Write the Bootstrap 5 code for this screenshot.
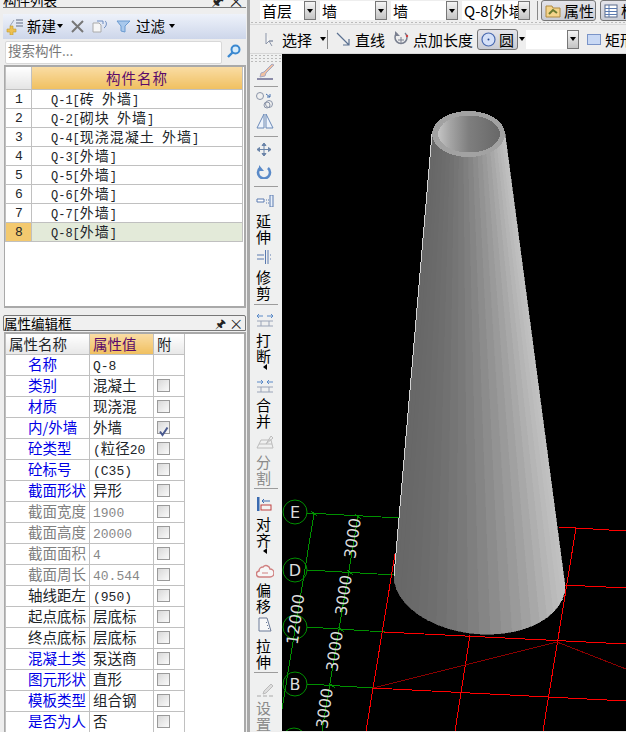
<!DOCTYPE html>
<html lang="zh">
<head>
<meta charset="utf-8">
<title>构件列表</title>
<link href="https://cdn.jsdelivr.net/npm/bootstrap@5.3.0/dist/css/bootstrap.min.css" rel="stylesheet">
<style>
html,body{margin:0;height:100%;overflow:hidden;background:#f0f0f0}
body{font-family:"Noto Sans CJK SC","Liberation Sans",sans-serif;font-size:14px;color:#000;line-height:1}
.app{width:626px;height:732px;overflow:hidden}
.leftcol{width:250px;height:732px;flex:none;background:#eeeeee;border-right:3px solid #a8a8a8;padding-right:1px}
.ptitle-top{height:8px;overflow:hidden;margin-left:3px;border-bottom:1px solid #777;display:flex;align-items:flex-end;justify-content:space-between;padding-right:4px}
.ptitle-top span{font-size:13.5px;line-height:14px;white-space:nowrap}
.pin{font-size:12px;line-height:14px;color:#222}
.tb1{height:25px;margin:6px 0 0 3px;background:linear-gradient(#eef2fa,#cdd6ea);gap:0;padding-left:3px;font-size:14.5px;white-space:nowrap}
.caret-d{display:inline-block;flex:none;width:0;height:0;border:3px solid transparent;border-top:4px solid #000;border-bottom:0}
.gp1{margin-left:1px}.gp2{margin-left:4px}.gp3{margin-left:5px}.gp4{margin-left:8px}
.searchrow{height:26px;padding:2px 0 0 5px}
.searchbox{width:217px;height:23px;background:#fff;border:1px solid #d8d8d8;border-radius:2px;color:#777;font-size:13.5px;padding:2px 0 0 2px}
.listbox{height:244px;margin-left:4px;margin-top:0;background:#fff;border:2px solid #a9a9a9;border-left-width:1px}
.gtab{table-layout:fixed;width:auto;margin:0;border-collapse:collapse;--bs-table-bg:transparent}
.gtab td,.gtab th{border:1px solid #c0c0c0;padding:0;font-weight:400;vertical-align:middle;white-space:nowrap;overflow:hidden;box-shadow:none}
.ltab{width:238px}
.ltab tr{height:19px}
.ltab tr.hd{height:23px}
.ltab th{border-top:0;background:linear-gradient(#f9dca4,#f0c060);color:#5a0a6a;text-align:center;font-size:14.5px;letter-spacing:1px}
.ltab th.ix{background:linear-gradient(#ffffff,#e4e4e4)}
.ltab td.ix{font-size:13px;padding-left:9px;font-family:"Liberation Mono",monospace}
.ltab td.nm{font-size:14px;padding-left:19px;letter-spacing:1px}
.mono{font-family:"Liberation Mono",monospace;font-size:12px;letter-spacing:0}
.ltab tr.sel td{background:#e3ead9}
.ltab tr.sel td.ix{background:#f3c96f}
.ptitle{height:16px;margin:7px 0 0 3px;border:1px solid #777;border-radius:2px 2px 0 0;background:#f0f0f0;font-size:13.5px;line-height:14px;padding-right:4px}
.propbox{height:401px;margin:1px 0 0 4px;border:2px solid #a9a9a9;border-left-width:1px;border-bottom:0;background:#fff;overflow:hidden}
.ptab{width:179px}
.ptab tr{height:21px}
.ptab tr.hd{height:20px}
.ptab th{border-top:0;font-size:14.5px;background:linear-gradient(#ffffff,#e8e8e8);padding-left:3px}
.ptab th.v{background:linear-gradient(#f9dca4,#f0c060);color:#5a0a6a;padding-left:3px}
.ptab td{font-size:14.5px}
.ptab td.n{padding-left:22px}
.ptab td.v{padding-left:3px}
.ptab td.c{padding-left:3px}
.blu{color:#0000e6}
.gry{color:#808080}
.ptab .mono{font-size:13px}
.gval .mono{color:#888}
.hi{background:#e3ead9}
.ckb{display:block;width:13px;height:13px;border:1px solid #9a9a9a;background:linear-gradient(135deg,#d8d8d8,#fafafa)}
.rightcol{flex:1;min-width:0;height:732px;background:#eeeeee}
.tr1{height:21px;padding-left:10px;font-size:15px;white-space:nowrap;overflow:hidden}
.cbox{background:#fff;height:19px;display:flex;align-items:center;padding-left:2px;overflow:hidden;flex:none}
.w44{width:44px}.w55{width:55px}.w56{width:56px}.w41{width:41px}
.cbtn{width:12px;height:19px;background:linear-gradient(#f4f4f4,#c4c4c4);border:1px solid #777;display:flex;align-items:center;justify-content:center;margin-right:4px;flex:none}
.selbtn{border:1px solid #777;border-radius:3px;background:linear-gradient(#e4e4ea,#c9ccd4);height:21px;display:flex;align-items:center;gap:3px;padding:0 3px;flex:none}
.sb-w{width:55px}
.vsepline{width:1px;height:19px;background:#888;margin:0 3px;flex:none}
.tr2 .vsepline{margin:0 0 0 1px}
.ml1{margin-left:1px}
.dots{height:3px;background-image:radial-gradient(#bbb 1px,transparent 1px);background-size:4px 3px}
.tr2{height:30px;padding-left:15px;font-size:15px;white-space:nowrap;overflow:hidden;border-top:1px solid #d8d8d8;border-bottom:1px solid #d8d8d8}
.tr2 svg,.tr2 span,.tr1 svg{flex:none}
.lowrow{height:677px}
.vbar{width:32px;flex:none;height:677px;overflow:hidden;background:#eff0f0;padding-left:6px}
.vbar svg{display:block}
.vgrip{height:8px;margin-left:-6px;background-image:radial-gradient(#bbb 1px,transparent 1px);background-size:4px 3px}
.vtx{display:block;width:16px;font-size:15px;line-height:16px;word-break:break-all}
.vtx.dim{color:#8a8a8a}
.hr1{width:24px;height:1px;background:#9c9c9c;margin-left:-2px}
.m1{margin-top:1px}.m2{margin-top:2px}.m3{margin-top:3px}.m4{margin-top:4px}.m5{margin-top:5px}.m6{margin-top:6px}.m7{margin-top:7px}.m8{margin-top:8px}.m9{margin-top:9px}.m10{margin-top:10px}
.varr{width:0;height:0;border:3px solid transparent;border-right:4px solid #000;border-left:0;margin-left:7px}
.scene{flex:1;min-width:0;background:#000;height:677px;overflow:hidden}
.scene svg{display:block}
</style>
</head>
<body>
<div class="app d-flex">
  <div class="leftcol d-flex flex-column">
    <div class="ptitle-top"><span>构件列表</span><span class="pin">🖈&nbsp; ✕</span></div>
    <div class="tb1 d-flex align-items-center">
      <svg width="20" height="18" viewBox="0 0 20 18"><path d="M10 3h7M10 6h7M10 9h7" stroke="#8a94a8" stroke-width="1.3"/><path d="M8 3 4 9" stroke="#9aa4b8"/><path d="M4 9h3v3h3v3H7v3H4v-3H1v-3h3z" fill="#eec050" stroke="#c09a30" stroke-width=".6"/></svg>
      <span class="gp1">新建</span><i class="caret-d gp1"></i>
      <svg class="gp4" width="13" height="13" viewBox="0 0 13 13"><path d="M1 1l11 11M12 1 1 12" stroke="#777" stroke-width="2"/></svg>
      <svg class="gp4" width="16" height="13" viewBox="0 0 16 13"><path d="M1 3h6l2 2v7H1z" fill="#f6f6f6" stroke="#aaa"/><path d="M5 1h6v3M13 1c2 1 2 5-1 7" fill="none" stroke="#6a8ac0"/></svg>
      <svg class="gp4" width="15" height="13" viewBox="0 0 15 13"><path d="M1 1h13L9 6v6l-4-1V6z" fill="#a8c8ec" stroke="#6a9ad0"/></svg>
      <span class="gp3">过滤</span><i class="caret-d gp2"></i>
    </div>
    <div class="searchrow d-flex align-items-start">
      <div class="searchbox">搜索构件...</div>
      <svg class="ms-1 m2" width="16" height="16" viewBox="0 0 16 16"><circle cx="9.5" cy="6.5" r="4" fill="#d8ecfa" stroke="#3a88d0" stroke-width="2"/><path d="M6.5 9.5 2 14" stroke="#3a88d0" stroke-width="2.4"/></svg>
    </div>
    <div class="listbox">
      <table class="table gtab ltab">
        <colgroup><col width="26"><col></colgroup>
        <tr class="hd"><th class="ix"></th><th>构件名称</th></tr>
        <tr><td class="ix">1</td><td class="nm"><span class="mono">Q-1[</span>砖<span class="mono"> </span>外墙<span class="mono">]</span></td></tr>
        <tr><td class="ix">2</td><td class="nm"><span class="mono">Q-2[</span>砌块<span class="mono"> </span>外墙<span class="mono">]</span></td></tr>
        <tr><td class="ix">3</td><td class="nm"><span class="mono">Q-4[</span>现浇混凝土<span class="mono"> </span>外墙<span class="mono">]</span></td></tr>
        <tr><td class="ix">4</td><td class="nm"><span class="mono">Q-3[</span>外墙<span class="mono">]</span></td></tr>
        <tr><td class="ix">5</td><td class="nm"><span class="mono">Q-5[</span>外墙<span class="mono">]</span></td></tr>
        <tr><td class="ix">6</td><td class="nm"><span class="mono">Q-6[</span>外墙<span class="mono">]</span></td></tr>
        <tr><td class="ix">7</td><td class="nm"><span class="mono">Q-7[</span>外墙<span class="mono">]</span></td></tr>
        <tr class="sel"><td class="ix">8</td><td class="nm"><span class="mono">Q-8[</span>外墙<span class="mono">]</span></td></tr>
      </table>
    </div>
    <div class="ptitle d-flex justify-content-between align-items-center"><span>属性编辑框</span><span class="pin">🖈&nbsp; ✕</span></div>
    <div class="propbox">
      <table class="table gtab ptab">
        <colgroup><col width="84"><col width="64"><col width="31"></colgroup>
        <tr class="hd"><th>属性名称</th><th class="v">属性值</th><th>附</th></tr>
        <tr><td class="n blu">名称</td><td class="v"><span class="mono">Q-8</span></td><td></td></tr>
        <tr><td class="n blu">类别</td><td class="v">混凝土</td><td class="c"><span class="ckb"></span></td></tr>
        <tr><td class="n blu">材质</td><td class="v">现浇混</td><td class="c"><span class="ckb"></span></td></tr>
        <tr><td class="n blu">内/外墙</td><td class="v">外墙</td><td class="c"><span class="ckb"><svg width="11" height="11" viewBox="0 0 11 11"><path d="M2 5.5 4.5 9 9.5 1.5" fill="none" stroke="#4a5a90" stroke-width="2"/></svg></span></td></tr>
        <tr><td class="n blu">砼类型</td><td class="v"><span class="mono">(</span>粒径<span class="mono">20</span></td><td class="c"><span class="ckb"></span></td></tr>
        <tr><td class="n blu">砼标号</td><td class="v"><span class="mono">(C35)</span></td><td class="c"><span class="ckb"></span></td></tr>
        <tr><td class="n blu">截面形状</td><td class="v hi">异形</td><td class="c"><span class="ckb"></span></td></tr>
        <tr><td class="n gry">截面宽度</td><td class="v gval"><span class="mono">1900</span></td><td class="c"><span class="ckb"></span></td></tr>
        <tr><td class="n gry">截面高度</td><td class="v gval"><span class="mono">20000</span></td><td class="c"><span class="ckb"></span></td></tr>
        <tr><td class="n gry">截面面积</td><td class="v gval"><span class="mono">4</span></td><td class="c"><span class="ckb"></span></td></tr>
        <tr><td class="n gry">截面周长</td><td class="v gval"><span class="mono">40.544</span></td><td class="c"><span class="ckb"></span></td></tr>
        <tr><td class="n">轴线距左</td><td class="v"><span class="mono">(950)</span></td><td class="c"><span class="ckb"></span></td></tr>
        <tr><td class="n">起点底标</td><td class="v">层底标</td><td class="c"><span class="ckb"></span></td></tr>
        <tr><td class="n">终点底标</td><td class="v">层底标</td><td class="c"><span class="ckb"></span></td></tr>
        <tr><td class="n blu">混凝土类</td><td class="v">泵送商</td><td class="c"><span class="ckb"></span></td></tr>
        <tr><td class="n blu">图元形状</td><td class="v">直形</td><td class="c"><span class="ckb"></span></td></tr>
        <tr><td class="n blu">模板类型</td><td class="v">组合钢</td><td class="c"><span class="ckb"></span></td></tr>
        <tr><td class="n blu">是否为人</td><td class="v">否</td><td class="c"><span class="ckb"></span></td></tr>
      </table>
    </div>
  </div>
  <div class="rightcol d-flex flex-column">
    <div class="tr1 d-flex align-items-center">
      <div class="cbox w44">首层</div><div class="cbtn"><i class="caret-d"></i></div>
      <div class="cbox w55">墙</div><div class="cbtn"><i class="caret-d"></i></div>
      <div class="cbox w55">墙</div><div class="cbtn"><i class="caret-d"></i></div>
      <div class="cbox w56"><span>Q-8[外墙]</span></div><div class="cbtn"><i class="caret-d"></i></div>
      <div class="vsepline"></div>
      <div class="selbtn sb-w"><svg width="16" height="14" viewBox="0 0 16 14"><path d="M1 2h6l1 2h7v9H1z" fill="#f4d48a" stroke="#b08a40"/><path d="M4 10l4-4 4 3" stroke="#6a7a30" fill="none" stroke-width="2"/></svg><span>属性</span></div>
      <div class="selbtn ms-1"><svg width="14" height="14" viewBox="0 0 14 14"><rect x="1" y="1" width="12" height="12" fill="#fff" stroke="#5a6a8a"/><path d="M5 1v12M1 4.500h12M1 7.500h12M1 10.500h12" stroke="#5a7ab0"/></svg><span>构件列表</span></div>
    </div>
    <div class="dots"></div>
    <div class="tr2 d-flex align-items-center">
      <svg width="9" height="15" viewBox="0 0 9 15"><path d="M1 1v11l3-3 3 5M4 9h4z" fill="#f4f4f4" stroke="#8a94a8"/></svg>
      <span class="ms-2">选择</span><i class="caret-d ms-2"></i>
      <div class="vsepline"></div>
      <svg class="ms-2" width="15" height="15" viewBox="0 0 15 15"><path d="M1 1 13 13M13 7v6H7" fill="none" stroke="#5a7090" stroke-width="1.200"/></svg>
      <span class="ms-1">直线</span>
      <svg class="ms-2" width="16" height="16" viewBox="0 0 16 16"><path d="M4 2a6 6 0 1 0 8 0" fill="none" stroke="#7a8090" stroke-width="1.500"/><path d="M5 9h6M8 6v6" stroke="#7a8090"/><path d="M2 0v5h5z" fill="#7a8090"/><circle cx="14" cy="5" r="1.200" fill="#d04040"/></svg>
      <span class="ms-1">点加长度</span>
      <div class="selbtn ms-1"><svg width="15" height="15" viewBox="0 0 15 15"><circle cx="7.500" cy="7.500" r="6.500" fill="#d4e0f8" stroke="#4a6ab0" stroke-width="1.200"/><circle cx="7.500" cy="7.500" r="1" fill="#2a4a90"/></svg><span>圆</span></div>
      <i class="caret-d ml1"></i>
      <div class="cbox w41 ml1"></div><div class="cbtn"><i class="caret-d"></i></div>
      <svg class="ms-1" width="14" height="11" viewBox="0 0 14 11"><rect x=".5" y=".5" width="13" height="10" fill="#c8d8f4" stroke="#7a94c8"/></svg>
      <span class="ms-1">矩形</span>
    </div>
    <div class="lowrow d-flex">
      <div class="vbar">
        <div class="vgrip"></div>
        <svg class="m1" width="18" height="18" viewBox="0 0 18 18"><path d="M16 1 8 9l-3 1-1 4 5-1 1-3 8-8z" fill="#f0c0a0" stroke="#a8a8c0"/><path d="M1 16h16" stroke="#6a6a90" stroke-width="1.500"/></svg>
        <div class="hr1 m5"></div>
        <svg class="m4" width="18" height="18" viewBox="0 0 18 18"><circle cx="4" cy="5" r="3.500" fill="none" stroke="#8a94a8"/><circle cx="13" cy="13" r="3.500" fill="none" stroke="#8a94a8"/><circle cx="11" cy="14" r="3" fill="none" stroke="#8a94a8"/><path d="M10 3l4 3M14 3v3h-3" fill="none" stroke="#4a74b0"/></svg>
        <svg class="m4" width="18" height="16" viewBox="0 0 18 16"><path d="M8 1 1 15h7zM10 1l7 14h-7z" fill="#eef4fc" stroke="#6a8ab8"/></svg>
        <div class="hr1 m7"></div>
        <svg class="m5" width="16" height="15" viewBox="0 0 16 15"><path d="M8 1v13M1 7.500h14M8 1 6 3.500h4zM8 14l-2-2.500h4zM1 7.500 3.500 5.500v4zM15 7.500l-2.500-2v4z" stroke="#6a84a8" fill="#6a84a8"/></svg>
        <svg class="m8" width="16" height="14" viewBox="0 0 16 14"><path d="M4 3a6 6 0 1 0 8 0" fill="none" stroke="#5a8ac8" stroke-width="2.600"/><path d="M3 0v6h5z" fill="#5a8ac8"/></svg>
        <div class="hr1 m7"></div>
        <svg class="m8" width="18" height="12" viewBox="0 0 18 12"><path d="M1 4h7v3H1zM10 5h1M10 8h1M12 5h1M12 8h1" fill="#fff" stroke="#5a7ab0"/><rect x="14" y="0" width="3" height="12" fill="#e8f0fa" stroke="#5a7ab0"/></svg>
        <span class="vtx m6">延伸</span>
        <svg class="m5" width="18" height="14" viewBox="0 0 18 14"><path d="M1 5h7M1 9h7M9.500 0v14M12 0v14M14 5h1M14 9h1" stroke="#5a7ab0"/></svg>
        <span class="vtx m5">修剪</span>
        <div class="hr1 m3"></div>
        <svg class="m8" width="18" height="14" viewBox="0 0 18 14"><path d="M1 3h6M17 3h-6M1 3l2-2M1 3l2 2M17 3l-2-2M17 3l-2 2" fill="none" stroke="#5a8ac8"/><path d="M1 8h16M1 13h16M5 8v5M13 8v5" stroke="#9aa4b8"/></svg>
        <span class="vtx m5">打断</span>
        <div class="varr"></div>
        <svg class="m9" width="18" height="14" viewBox="0 0 18 14"><path d="M1 3h6M17 3h-6M7 3 5 1M7 3 5 5M11 3l2-2M11 3l2 2" fill="none" stroke="#5a8ac8"/><path d="M1 8h16M1 13h16M5 8v5M13 8v5" stroke="#9aa4b8"/></svg>
        <span class="vtx m4">合并</span>
        <svg class="m7" width="18" height="13" viewBox="0 0 18 13"><path d="M1 12 5 4h10l2 8zM3 8h13M15 0l2 2-7 6z" fill="none" stroke="#bcbcbc"/></svg>
        <span class="vtx m5 dim">分割</span>
        <div class="hr1 m2"></div>
        <svg class="m8" width="18" height="14" viewBox="0 0 18 14"><rect x="1" y="0" width="2.500" height="14" fill="#3a6ab0"/><rect x="5" y="8" width="10" height="5" fill="#f4f4f4" stroke="#c04040"/><path d="M14 4H6M8 2 6 4l2 2" fill="none" stroke="#3a6ab0"/></svg>
        <span class="vtx m5">对齐</span>
        <div class="varr"></div>
        <svg class="m10" width="18" height="15" viewBox="0 0 18 15"><path d="M4 13a3 3 0 0 1-1-6 4 4 0 0 1 4-4 4 4 0 0 1 7 2 4 4 0 0 1 0 8z" fill="#f6f6f6" stroke="#d08080" stroke-width="1.500"/><path d="M6 9h6" stroke="#d08080"/></svg>
        <span class="vtx m3">偏移</span>
        <svg class="m3" width="18" height="16" viewBox="0 0 18 16"><path d="M3 1h8l4 13H3z" fill="#f8f8f8" stroke="#6a7a98"/><path d="M10 5l1 1M11 8l1 1M12 11l1 1" stroke="#6a7a98"/></svg>
        <span class="vtx m5">拉伸</span>
        <div class="hr1 m2"></div>
        <svg class="m10" width="18" height="15" viewBox="0 0 18 15"><path d="M15 1 8 8l-1 3 3-1 7-7z" fill="#ddd" stroke="#bbb"/><path d="M1 13h4M7 13h4M13 13h4" stroke="#aaa"/></svg>
        <span class="vtx m2 dim">设置高</span>
      </div>
      <div class="scene">
        <svg width="344" height="677" viewBox="282 55 344 677">
          <defs>
            <linearGradient id="inw" x1="0" x2="1" y1="0" y2="0">
              <stop offset="0" stop-color="#c4c4c4"/><stop offset=".2" stop-color="#a4a4a4"/><stop offset=".5" stop-color="#7e7e7e"/><stop offset="1" stop-color="#686868"/>
            </linearGradient>
          </defs>
          <g stroke="#009000" stroke-width="1" fill="none" shape-rendering="crispEdges">
            <path d="M307 514 400 519M307 571 395 576M307 628 385 633M307 685 373 689"/>
            <path d="M314 515 282 710M358 517 322 732"/>
            <path d="M311 512l6 5M355 515l6 5M347 571l6 5M338 628l6 5M329 684l6 5"/>
          </g>
          <g stroke="#009000" stroke-width="1" fill="none">
            <circle cx="295" cy="513" r="12"/><circle cx="295" cy="571" r="12"/><circle cx="295" cy="628" r="12"/><circle cx="295" cy="685" r="12"/><circle cx="294" cy="741" r="12"/>
          </g>
          <g stroke="#ff0000" stroke-width="1" fill="none" shape-rendering="crispEdges">
            <path d="M384 633 626 645M373 689 626 702M559 528 626 532M564 586 626 589"/>
            <path d="M395 555 366 732M470 636 455 732M576 529 543 732"/>
          </g>
          <path d="M373 689 557 643 626 670" stroke="#8a0000" fill="none" shape-rendering="crispEdges"/>
          <g fill="#ddd" font-family="DejaVu Sans,sans-serif" font-size="16" text-anchor="middle">
            <text transform="translate(358 540) rotate(-82)">3000</text>
            <text transform="translate(349 597) rotate(-82)">3000</text>
            <text transform="translate(340 653) rotate(-82)">3000</text>
            <text transform="translate(330 710) rotate(-82)">3000</text>
            <text transform="translate(301 621) rotate(-82)">12000</text>
            <text x="295" y="519">E</text><text x="295" y="577">D</text><text x="295" y="691">B</text>
          </g>
          <g id="cone" shape-rendering="crispEdges"></g>
          <ellipse cx="468.500" cy="135" rx="36.500" ry="23" fill="#a2a2a2" shape-rendering="crispEdges"/>
          <ellipse cx="469" cy="135" rx="31" ry="18.500" fill="url(#inw)" shape-rendering="crispEdges"/>
        </svg>
      </div>
    </div>
  </div>
</div>
<script>
(function(){
  var ns='http://www.w3.org/2000/svg',g=document.getElementById('cone');
  var n=24;
  function top(a){return [468.5+36.5*Math.cos(a),135+23*Math.sin(a)];}
  function bot(a){var c=Math.cos(a);return [479.5+85.5*c,582+5*c+53*Math.sin(a)];}
  for(var i=0;i<n;i++){
    var a0=Math.PI-i*Math.PI/n,a1=Math.PI-(i+1)*Math.PI/n,m=(a0+a1)/2;
    var v=Math.round(104+90*Math.pow((1+Math.cos(m))/2,1.8));
    var c='rgb('+v+','+v+','+v+')';
    var p=document.createElementNS(ns,'polygon');
    p.setAttribute('points',[top(a0),top(a1),bot(a1),bot(a0)].map(function(q){return q.join(',')}).join(' '));
    p.setAttribute('fill',c);
    p.setAttribute('stroke',c);
    p.setAttribute('stroke-width','.6');
    g.appendChild(p);
  }
  var b=document.createElementNS(ns,'path');
  b.setAttribute('d','M'+top(Math.PI)+'L'+bot(Math.PI));
  b.setAttribute('stroke','#d4d4d4');
  b.setAttribute('fill','none');
  g.appendChild(b);
})();
</script>
<script src="https://cdn.jsdelivr.net/npm/bootstrap@5.3.0/dist/js/bootstrap.bundle.min.js"></script>
</body>
</html>
